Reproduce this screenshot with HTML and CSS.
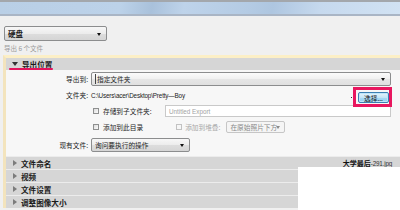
FILE: index.html
```html
<!DOCTYPE html>
<html lang="zh-CN">
<head>
<meta charset="utf-8">
<link rel="stylesheet" href="styles.css">
</head>
<body>
<div class="titlebar"></div>
<div class="main">
  <div class="combo disk"><span class="ctext">硬盘</span><i class="arrow"></i></div>
  <div class="count">导出 6 个文件</div>
  <div class="panel">
    <div class="section open"><span class="tri-down"></span><span class="stitle">导出位置</span></div>
    <div class="body">
      <span class="lbl">导出到:</span>
      <div class="combo wide"><span class="ctext">指定文件夹</span><i class="arrow"></i></div>

      <span class="lbl">文件夹:</span>
      <div class="val folder"><span class="path">C:\Users\acer\Desktop\Pretty—Boy</span><span class="dot"></span><span class="choose">选择...</span></div>

      <span class="lbl"></span>
      <div class="val"><span class="cb"></span><span class="cbtext">存储到子文件夹:</span><div class="input">Untitled Export</div></div>

      <span class="lbl"></span>
      <div class="val"><span class="cb"></span><span class="cbtext">添加到此目录</span><span class="cb dis second"></span><span class="cbtext distext">添加到堆叠:</span><div class="combo small disabled"><span class="ctext">在原始照片下方</span><i class="arrow"></i></div></div>

      <span class="lbl">现有文件:</span>
      <div class="combo mid"><span class="ctext">询问要执行的操作</span><i class="arrow"></i></div>
    </div>
    <div class="section"><span class="tri-right"></span><span class="stitle">文件命名</span><span class="file"><b>大学最后</b>-291.jpg</span></div>
    <div class="section"><span class="tri-right"></span><span class="stitle">视频</span></div>
    <div class="section"><span class="tri-right"></span><span class="stitle">文件设置</span></div>
    <div class="section"><span class="tri-right"></span><span class="stitle">调整图像大小</span></div>
  </div>
</div>
<div class="mark-underline"></div>
<div class="mark-box"></div>
<div class="popup"></div>
</body>
</html>
```

FILE: styles.css
```css
* { box-sizing: border-box; }
html, body { margin: 0; padding: 0; }
body {
  width: 400px;
  height: 210px;
  overflow: hidden;
  position: relative;
  background: #f0f0f0;
  font-family: "Noto Sans CJK SC", "Liberation Sans", sans-serif;
  font-size: 6.7px;
  color: #1e1e1e;
}
.titlebar {
  height: 16px;
  border-top: 2px solid #a3a7ac;
  border-bottom: 2px solid #a9b5c5;
  background: linear-gradient(100deg, #b9cfe6 0%, #bcd2e9 30%, #a9c1db 38%, #bed3ea 46%, #b4cbe4 62%, #aec6e0 68%, #c6d9ee 80%, #d1e2f3 100%);
}
.main { padding: 0; }
.combo {
  position: relative;
  display: flex;
  align-items: center;
  border: 1px solid #8c8d8e;
  border-radius: 2px;
  background: linear-gradient(#f7f7f7, #ececec 50%, #dddddd 51%, #d5d5d5);
  padding-left: 3px;
}
.combo .arrow {
  position: absolute;
  right: 5px;
  top: 50%;
  margin-top: -1px;
  width: 0; height: 0;
  border-left: 2.5px solid transparent;
  border-right: 2.5px solid transparent;
  border-top: 3px solid #111;
}
.disk {
  margin: 10px 0 0 4px;
  width: 103px;
  height: 15px;
}
.disk .ctext { font-size: 7.5px; font-weight: bold; color: #222; }
.count {
  height: 14px;
  line-height: 15px;
  padding-left: 4px;
  color: #9b9b9b;
  font-size: 6.5px;
}
.panel {
  margin-left: 3px;
  border-left: 3px solid #f3e4bd;
  border-top: 3px solid #fcefc6;
}
.section {
  display: flex;
  align-items: center;
  height: 13px;
  border-top: 1px solid #ececec;
  background: #d6d6d6;
  padding-left: 5px;
  position: relative;
}
.section.open { height: 12px; border-top: none; }
.stitle { font-weight: bold; font-size: 7.6px; color: #1a1a1a; margin-left: 4px; }
.tri-down {
  width: 0; height: 0;
  border-left: 3px solid transparent;
  border-right: 3px solid transparent;
  border-top: 4px solid #333;
  margin-left: 1px;
}
.tri-right {
  width: 0; height: 0;
  border-top: 3px solid transparent;
  border-bottom: 3px solid transparent;
  border-left: 4px solid #7c7c7c;
  margin-left: 2px;
}
.file {
  margin-left: auto;
  margin-right: 8px;
  font-size: 6.3px;
  color: #333;
  font-family: "Liberation Sans", sans-serif;
  letter-spacing: -0.2px;
}
.file b { font-family: "Noto Sans CJK SC", sans-serif; font-size: 7px; color: #111; letter-spacing: 0; }
.body {
  display: grid;
  grid-template-columns: 82px 300px;
  column-gap: 3px;
  grid-template-rows: 14px 18px 14px 18px 18px;
  align-items: center;
  padding: 2px 0 2px 0;
  background: #f7f7f7;
}
.lbl { text-align: right; color: #222; }
.wide {
  height: 14px;
  background: linear-gradient(#fbfbfb, #f0f0f0 50%, #e6e6e6 51%, #e0e0e0);
}
.wide .ctext { border-left: 1px solid #444; padding-left: 1px; }
.val { display: flex; align-items: center; height: 100%; }
.folder { position: relative; }
.path {
  font-family: "Liberation Sans", sans-serif;
  font-size: 6.3px;
  letter-spacing: -0.15px;
  color: #222;
}
.dot {
  margin-left: auto;
  width: 1px; height: 1px;
  background: #333;
  margin-top: 5px;
}
.choose {
  margin: 5px 2px 0 6px;
  width: 31px;
  height: 11px;
  border: 1px solid #3b7fb2;
  border-radius: 2px;
  background: linear-gradient(#e5f4fc, #c4e5f6 50%, #a7d9f5 51%, #98d0f0);
  display: flex;
  align-items: center;
  justify-content: center;
  font-size: 6.7px;
  color: #111;
  box-shadow: inset 0 0 0 1px #bfe6fa;
}
.cb {
  width: 6px; height: 6px;
  border: 1px solid #8e8f8f;
  background: linear-gradient(135deg, #dcdcdc, #fbfbfb);
  margin-left: 2px;
}
.cb.dis { border-color: #c2c2c2; background: #f6f6f6; }
.cb.second { margin-left: 33px; }
.cbtext { margin-left: 4px; }
.distext { color: #a8a8a8; margin-left: 3px; }
.input {
  margin-left: auto;
  width: 226px;
  height: 12px;
  border: 1px solid #c9c9c9;
  background: #fff;
  color: #a3a3a3;
  font-family: "Liberation Sans", sans-serif;
  font-size: 6.3px;
  display: flex;
  align-items: center;
  padding-left: 3px;
}
.small {
  margin-left: 6px;
  width: 59px;
  height: 12px;
  border-color: #c6c6c6;
  background: #f5f5f5;
  color: #8a8a8a;
}
.small .arrow { border-top-color: #8a8a8a; right: 4px; }
.mid {
  width: 99px;
  height: 14px;
}
.mark-underline {
  position: absolute;
  left: 9px;
  top: 68px;
  width: 44px;
  height: 2px;
  background: #e3145c;
  border-radius: 1px;
}
.mark-box {
  position: absolute;
  left: 353px;
  top: 87px;
  width: 39px;
  height: 20px;
  border: 3px solid #e8175f;
}
.popup {
  position: absolute;
  left: 298px;
  top: 167px;
  width: 102px;
  height: 43px;
  background: #ffffff;
}
```
